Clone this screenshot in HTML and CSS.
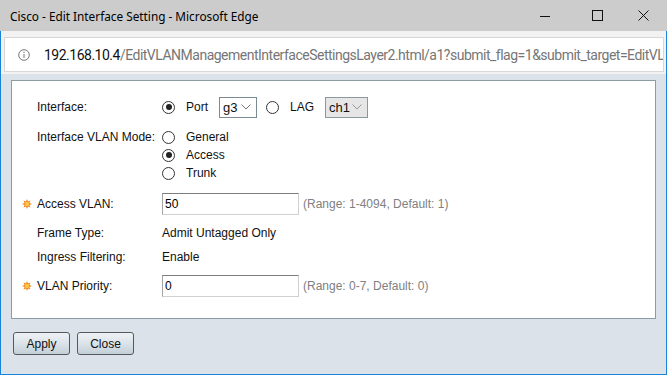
FILE: index.html
```html
<!DOCTYPE html>
<html lang="en">
<head>
    <meta charset="UTF-8">
    <meta name="viewport" content="width=device-width, initial-scale=1">
    <title>Cisco - Edit Interface Setting</title>
    <link rel="stylesheet" href="styles.css">
</head>
<body>
<div class="window">
    <!-- Browser title bar -->
    <div class="titlebar">
        <span class="title">Cisco - Edit Interface Setting - Microsoft Edge</span>
        <div class="controls">
            <svg class="ctl ctl-min" width="10" height="10" viewBox="0 0 10 10"><line x1="0" y1="5.5" x2="10" y2="5.5" stroke="#111" stroke-width="1"/></svg>
            <svg class="ctl ctl-max" width="11" height="11" viewBox="0 0 11 11"><rect x="0.5" y="0.5" width="10" height="10" fill="none" stroke="#111" stroke-width="1"/></svg>
            <svg class="ctl ctl-close" width="11" height="11" viewBox="0 0 11 11"><path d="M0.5 0.5 L10.5 10.5 M10.5 0.5 L0.5 10.5" stroke="#111" stroke-width="1"/></svg>
        </div>
    </div>

    <!-- Address bar -->
    <div class="addressbar">
        <div class="address">
            <svg class="info" width="12" height="12" viewBox="0 0 12 12">
                <circle cx="6" cy="6" r="5.3" fill="none" stroke="#777" stroke-width="1"/>
                <line x1="6" y1="5" x2="6" y2="9" stroke="#777" stroke-width="1"/>
                <circle cx="6" cy="3.3" r="0.7" fill="#777"/>
            </svg>
            <span class="url"><span class="host">192.168.10.4</span>/EditVLANManagementInterfaceSettingsLayer2.html/a1?submit_flag=1&amp;submit_target=EditVLA</span>
        </div>
    </div>

    <div class="content">
        <div class="panel">
            <div class="row">
                <span class="req"></span>
                <span class="label">Interface:</span>
                <div class="value">
                    <input type="radio" name="iftype" class="radio" checked>
                    <span class="opt">Port</span>
                    <span class="select">g3<svg class="chev" width="10" height="6" viewBox="0 0 10 6"><path d="M0.5 0.5 L5 5 L9.5 0.5" fill="none" stroke="#777" stroke-width="1"/></svg></span>
                    <input type="radio" name="iftype" class="radio radio-lag">
                    <span class="opt opt-lag">LAG</span>
                    <span class="select select-off">ch1<svg class="chev" width="10" height="6" viewBox="0 0 10 6"><path d="M0.5 0.5 L5 5 L9.5 0.5" fill="none" stroke="#999" stroke-width="1"/></svg></span>
                </div>
            </div>

            <div class="row row-mode">
                <span class="req"></span>
                <span class="label">Interface VLAN Mode:</span>
                <div class="choices">
                    <label class="choice"><input type="radio" name="mode" class="radio">General</label>
                    <label class="choice"><input type="radio" name="mode" class="radio" checked>Access</label>
                    <label class="choice"><input type="radio" name="mode" class="radio">Trunk</label>
                </div>
            </div>

            <div class="row row-field">
                <span class="req"><svg width="10" height="10" viewBox="0 0 10 10"><polygon points="5,0 6,2.6 8.5,1.5 7.4,4 10,5 7.4,6 8.5,8.5 6,7.4 5,10 4,7.4 1.5,8.5 2.6,6 0,5 2.6,4 1.5,1.5 4,2.6" fill="#f08519"/><circle cx="5" cy="5" r="2.2" fill="#fbc546"/></svg></span>
                <span class="label">Access VLAN:</span>
                <div class="value">
                    <input type="text" class="text-input" value="50">
                    <span class="hint">(Range: 1-4094, Default: 1)</span>
                </div>
            </div>

            <div class="row">
                <span class="req"></span>
                <span class="label">Frame Type:</span>
                <div class="value">Admit Untagged Only</div>
            </div>

            <div class="row">
                <span class="req"></span>
                <span class="label">Ingress Filtering:</span>
                <div class="value">Enable</div>
            </div>

            <div class="row row-field">
                <span class="req"><svg width="10" height="10" viewBox="0 0 10 10"><polygon points="5,0 6,2.6 8.5,1.5 7.4,4 10,5 7.4,6 8.5,8.5 6,7.4 5,10 4,7.4 1.5,8.5 2.6,6 0,5 2.6,4 1.5,1.5 4,2.6" fill="#f08519"/><circle cx="5" cy="5" r="2.2" fill="#fbc546"/></svg></span>
                <span class="label">VLAN Priority:</span>
                <div class="value">
                    <input type="text" class="text-input" value="0">
                    <span class="hint">(Range: 0-7, Default: 0)</span>
                </div>
            </div>
        </div>

        <div class="buttons">
            <button type="button" class="btn btn-apply">Apply</button>
            <button type="button" class="btn btn-close">Close</button>
        </div>
    </div>
</div>
</body>
</html>
```

FILE: styles.css
```css
html, body {
    margin: 0;
    padding: 0;
    width: 667px;
    height: 375px;
    overflow: hidden;
}
body {
    font-family: "Liberation Sans", Arial, sans-serif;
    font-size: 12px;
    color: #111;
}
.window {
    height: 375px;
    box-sizing: border-box;
    border: 1px solid #1883d7;
    border-top: none;
    display: flex;
    flex-direction: column;
}

/* title bar */
.titlebar {
    height: 31px;
    background-color: #cccccc;
    display: flex;
    align-items: center;
    margin: 0 -1px;
    padding-left: 10px;
}
.title {
    font-family: "Noto Sans", sans-serif;
    font-size: 11.8px;
    color: #000;
    flex: 1;
}
.controls {
    display: flex;
    align-items: center;
}
.ctl {
    display: block;
}
.ctl-min {
    margin-right: 42px;
}
.ctl-max {
    margin-right: 35px;
}
.ctl-close {
    margin-right: 18px;
}

/* address bar */
.addressbar {
    height: 43px;
    background-color: #f2f2f2;
    padding: 6px 2px 0 3px;
    box-sizing: border-box;
}
.address {
    height: 35px;
    box-sizing: border-box;
    background-color: #fff;
    border: 1px solid #d7d7d7;
    display: flex;
    align-items: center;
    padding-left: 13px;
    overflow: hidden;
    white-space: nowrap;
}
.info {
    flex: none;
    margin-right: 14px;
}
.url {
    font-family: Roboto, sans-serif;
    font-size: 14px;
    letter-spacing: -0.5px;
    color: #767676;
}
.host {
    color: #111;
}

/* dialog content */
.content {
    flex: 1;
    background-color: #dbe2e9;
    padding: 6px 10px 0 10px;
}
.panel {
    height: 239px;
    box-sizing: border-box;
    background-color: #fff;
    border: 1px solid #8d9ba5;
    padding: 14px 0 0 10px;
}
.row {
    display: grid;
    grid-template-columns: 15px 125px 1fr;
    align-items: center;
    height: 24px;
}
.row-field {
    height: 28px;
    margin: 3px 0;
}
.row-mode {
    height: auto;
    align-items: start;
    padding: 9px 0 5px 0;
}
.req svg {
    display: block;
}
.value {
    display: flex;
    align-items: center;
}

/* radios */
.radio {
    appearance: none;
    -webkit-appearance: none;
    width: 13px;
    height: 13px;
    margin: 0 11px 0 0;
    border: 1px solid #333;
    border-radius: 50%;
    box-sizing: border-box;
    background-color: #fff;
    display: inline-block;
    position: relative;
    flex: none;
}
.radio:checked::after {
    content: "";
    position: absolute;
    left: 2.5px;
    top: 2.5px;
    width: 6px;
    height: 6px;
    border-radius: 50%;
    background-color: #222;
}
.opt {
    margin-right: 11px;
}
.radio-lag {
    margin-left: 9px;
}
.opt-lag {
    margin-right: 11px;
}
.choices {
    display: flex;
    flex-direction: column;
}
.choice,
.row-mode .label {
    height: 18px;
    line-height: 18px;
}
.choice {
    display: flex;
    align-items: center;
}

/* select boxes */
.select {
    display: inline-flex;
    align-items: center;
    justify-content: space-between;
    height: 21px;
    box-sizing: border-box;
    border: 1px solid #7b8b95;
    padding: 0 5px 0 3px;
    width: 38px;
    font-size: 13px;
}
.select-off {
    background-color: #e6e6e6;
    border-color: #8c989f;
    width: 43px;
}
.chev {
    display: block;
}

/* text fields */
.text-input {
    width: 137px;
    height: 22px;
    box-sizing: border-box;
    border: 1px solid;
    border-color: #7d7d7d #d0d0d0 #d0d0d0 #a3a3a3;
    padding: 0 2px;
    margin: 0;
    font-family: "Liberation Sans", Arial, sans-serif;
    font-size: 12px;
    color: #000;
    outline: none;
}
.hint {
    margin-left: 4px;
    color: #808080;
}

/* dialog buttons */
.buttons {
    display: flex;
    gap: 7px;
    padding: 13px 0 0 2px;
}
.btn {
    height: 23px;
    box-sizing: border-box;
    border: 1px solid #55595c;
    border-radius: 3px;
    background: linear-gradient(to bottom, #eef2f5 0%, #dbe3e9 50%, #c3cfd8 100%);
    font-family: "Liberation Sans", Arial, sans-serif;
    font-size: 12px;
    color: #111;
    padding: 0;
}
.btn-apply {
    width: 57px;
}
.btn-close {
    width: 57px;
}
```
